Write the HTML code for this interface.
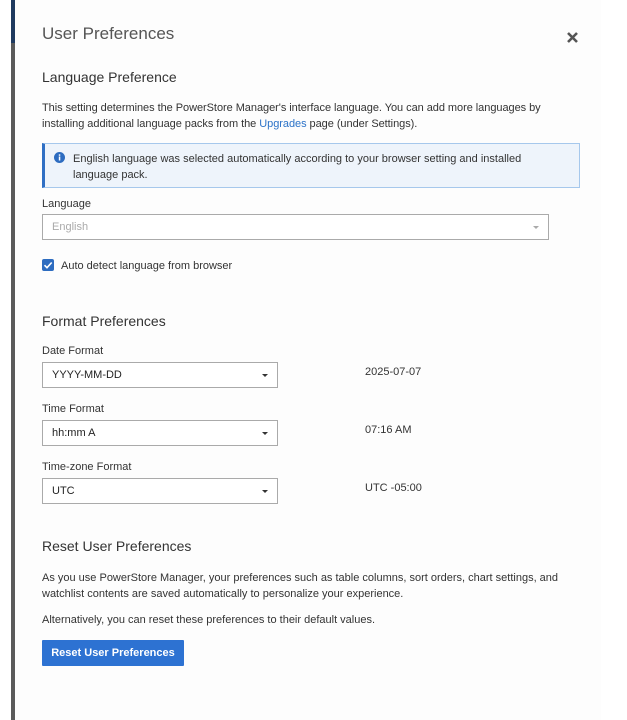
<!DOCTYPE html>
<html><head><style>
*{box-sizing:border-box;margin:0;padding:0}
body{width:627px;height:720px;background:#fff;font-family:"Liberation Sans",sans-serif;color:#333;position:relative;overflow:hidden;font-size:11px}
.a{position:absolute;white-space:nowrap}
.bar{position:absolute;left:11px;top:0;width:4px;height:720px;background:#5a5a5a}
.bar2{position:absolute;left:11px;top:0;width:4px;height:43px;background:#1f3a5f}
.panel{position:absolute;left:15px;top:0;width:586px;height:720px;background:#fdfdfd}
h2{font-weight:normal;font-size:14px;color:#333}
.sel{position:absolute;border:1px solid #aaa;background:#fff;height:26px;padding-left:9px;line-height:25px;font-size:11px;color:#222}
.car{position:absolute;right:9px;top:11px;width:0;height:0;border-left:3px solid transparent;border-right:3px solid transparent;border-top:3px solid #333}
</style></head><body>
<div class="panel"></div>
<div class="bar"></div><div class="bar2"></div>
<div class="a" style="left:42px;top:24px;font-size:17px;color:#555">User Preferences</div>
<svg class="a" style="left:566px;top:31px" width="13" height="13" viewBox="0 0 13 13"><path d="M2 2L11 11M11 2L2 11" stroke="#555" stroke-width="2.6"/></svg>
<h2 class="a" style="left:42px;top:69px">Language Preference</h2>
<div class="a" style="left:42px;top:100px;line-height:16px;letter-spacing:-0.05px">This setting determines the PowerStore Manager's interface language. You can add more languages by<br>installing additional language packs from the <span style="color:#2c73c8">Upgrades</span> page (under Settings).</div>
<div class="a" style="left:42px;top:143px;width:538px;height:45px;background:#eef4fb;border:1px solid #a6c8ec;border-left:3px solid #2f6fc4"></div>
<svg class="a" style="left:54px;top:152px" width="11" height="11" viewBox="0 0 11 11"><circle cx="5.5" cy="5.5" r="5.5" fill="#2d6cc0"/><rect x="4.8" y="4.5" width="1.5" height="4" fill="#fff"/><rect x="4.8" y="2.3" width="1.5" height="1.5" fill="#fff"/></svg>
<div class="a" style="left:73px;top:151px;line-height:16px">English language was selected automatically according to your browser setting and installed<br>language pack.</div>
<div class="a" style="left:42px;top:198px">Language</div>
<div class="sel" style="left:42px;top:214px;width:507px;color:#aaa">English<div class="car" style="border-top-color:#aaa"></div></div>
<div class="a" style="left:42px;top:259px;width:12px;height:12px;background:#2d6cc0;border-radius:2px"></div>
<svg class="a" style="left:42px;top:259px" width="12" height="12" viewBox="0 0 12 12"><path d="M2.5 6.2L5 8.7L9.7 3.5" stroke="#fff" stroke-width="1.6" fill="none"/></svg>
<div class="a" style="left:61px;top:260px">Auto detect language from browser</div>
<h2 class="a" style="left:42px;top:313px">Format Preferences</h2>
<div class="a" style="left:42px;top:345px">Date Format</div>
<div class="sel" style="left:42px;top:362px;width:236px">YYYY-MM-DD<div class="car"></div></div>
<div class="a" style="left:365px;top:366px">2025-07-07</div>
<div class="a" style="left:42px;top:403px">Time Format</div>
<div class="sel" style="left:42px;top:420px;width:236px">hh:mm A<div class="car"></div></div>
<div class="a" style="left:365px;top:424px">07:16 AM</div>
<div class="a" style="left:42px;top:461px">Time-zone Format</div>
<div class="sel" style="left:42px;top:478px;width:236px">UTC<div class="car"></div></div>
<div class="a" style="left:365px;top:482px">UTC -05:00</div>
<h2 class="a" style="left:42px;top:538px">Reset User Preferences</h2>
<div class="a" style="left:42px;top:570px;line-height:16px">As you use PowerStore Manager, your preferences such as table columns, sort orders, chart settings, and<br>watchlist contents are saved automatically to personalize your experience.</div>
<div class="a" style="left:42px;top:614px">Alternatively, you can reset these preferences to their default values.</div>
<div class="a" style="left:42px;top:640px;width:142px;height:26px;background:#2d72d2;color:#fff;font-weight:bold;font-size:11px;line-height:27px;text-align:center;border-radius:1px">Reset User Preferences</div>
</body></html>
